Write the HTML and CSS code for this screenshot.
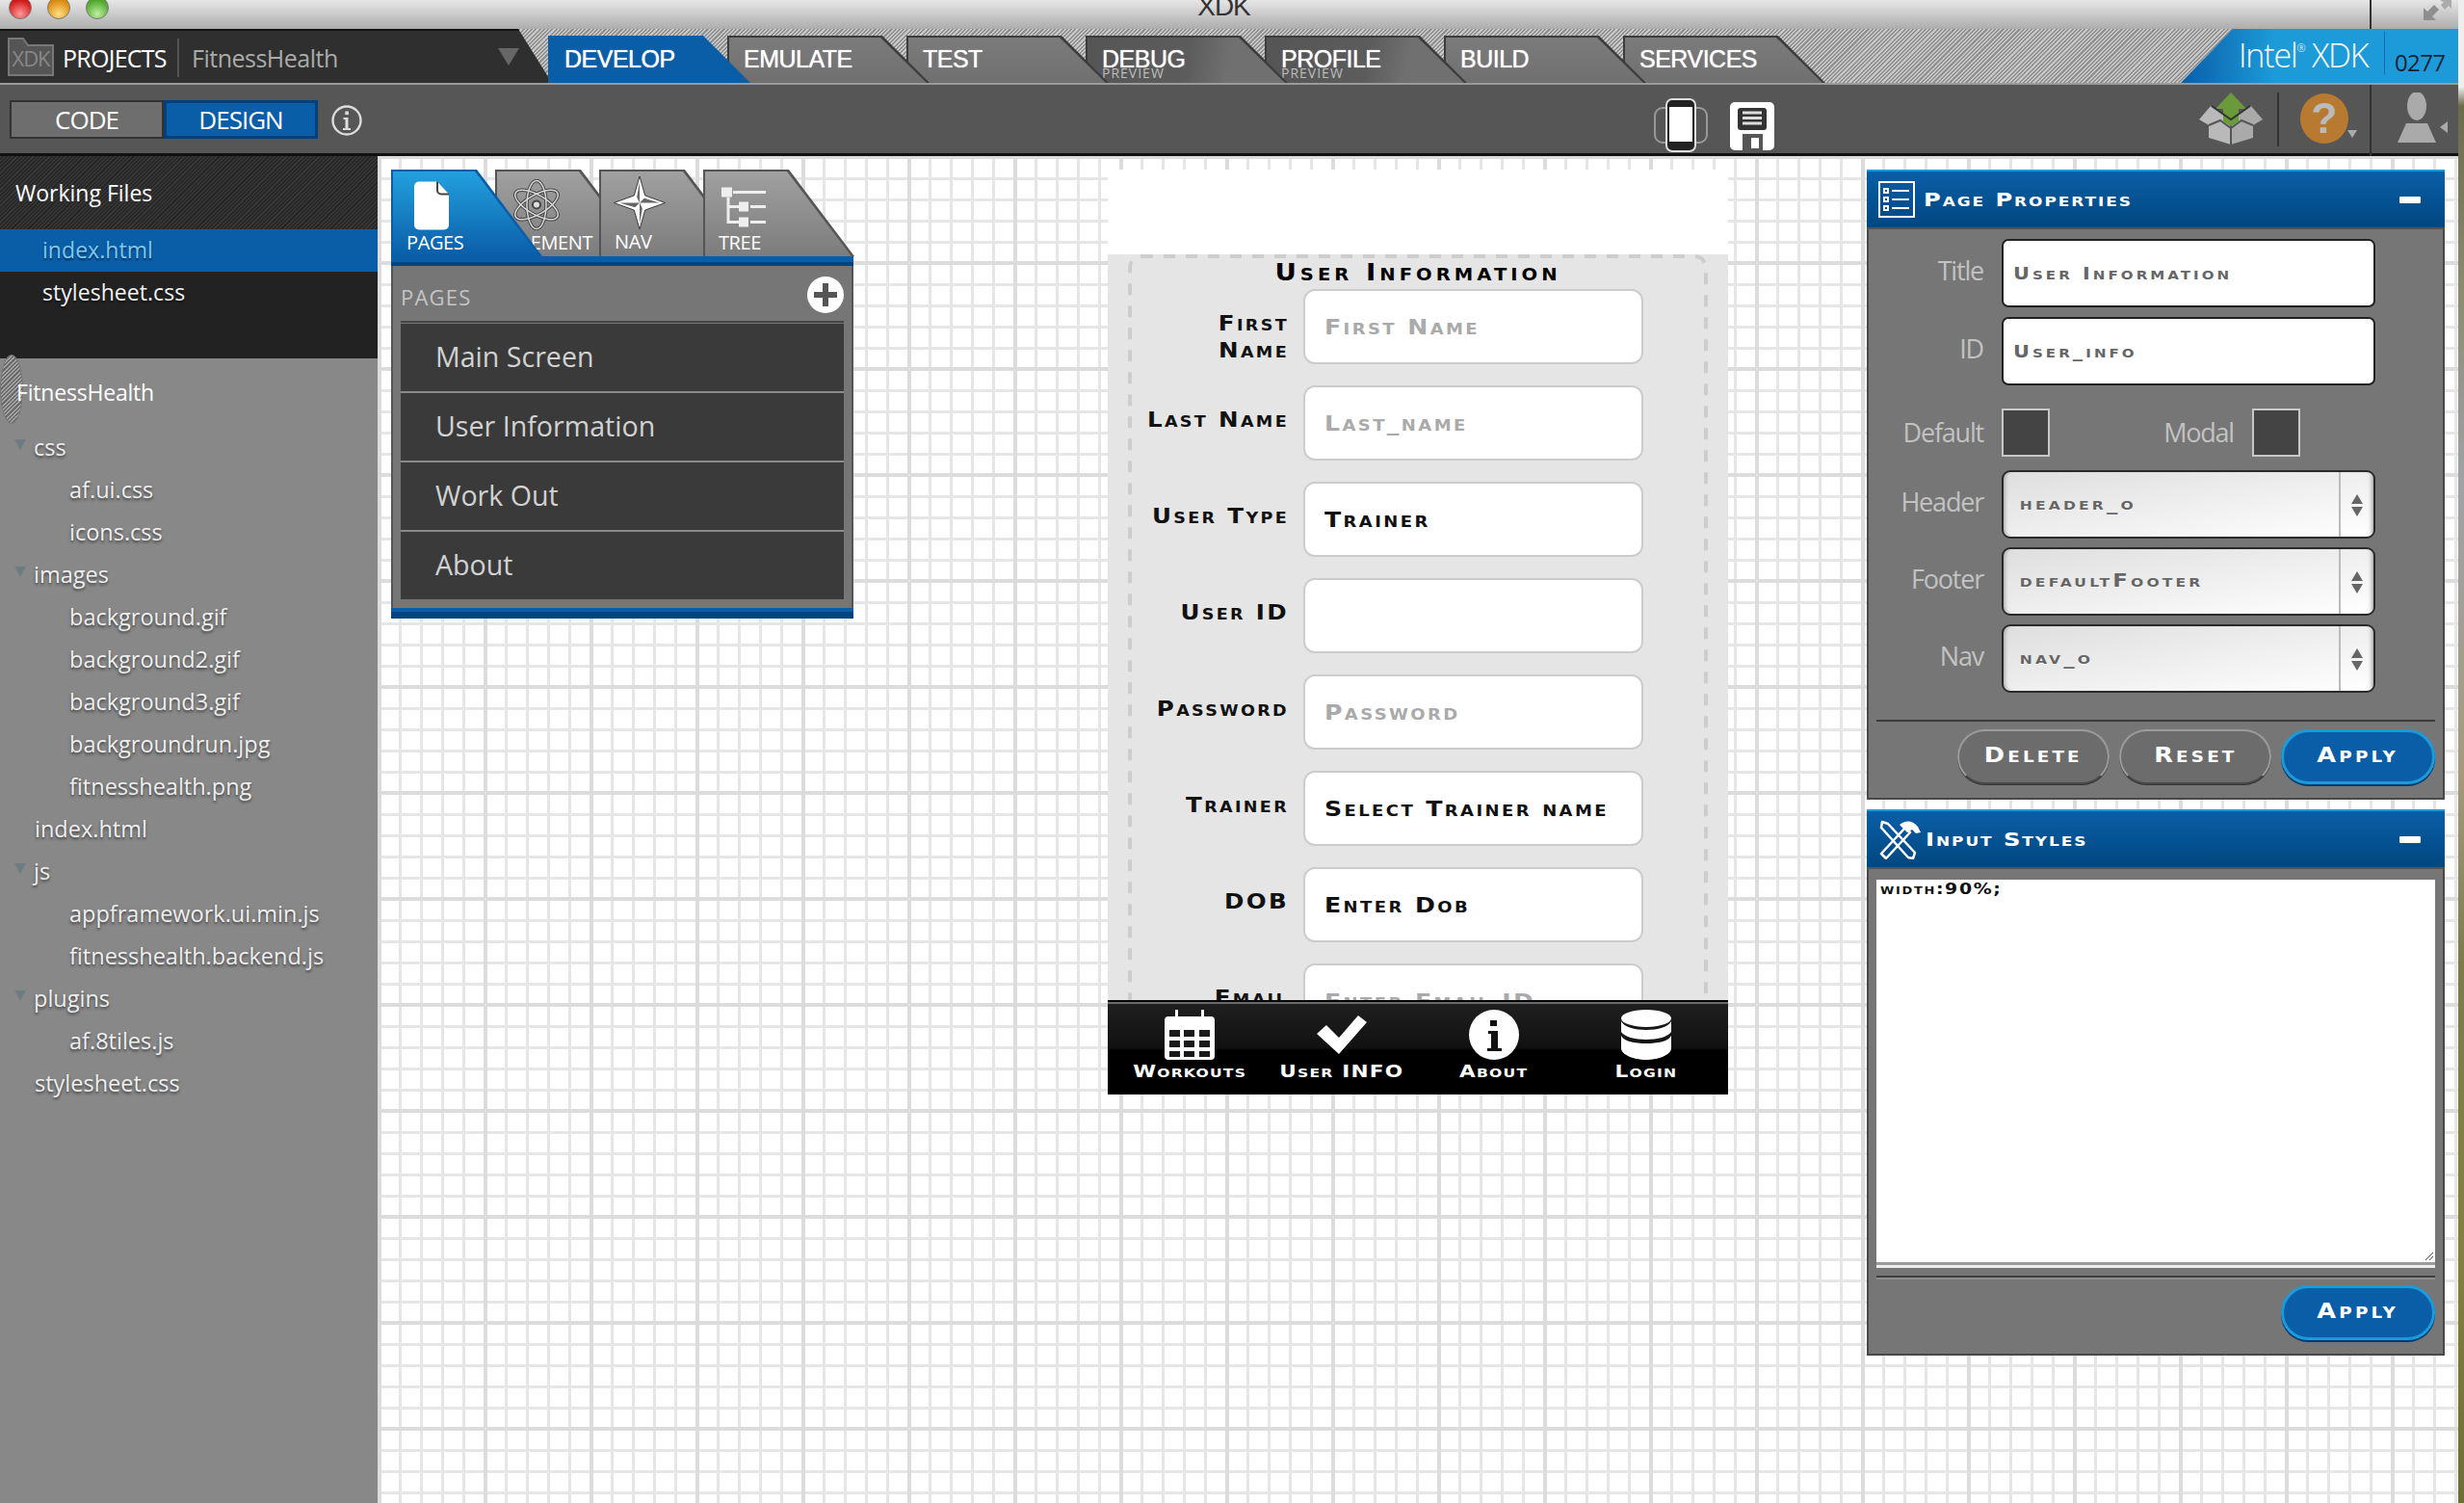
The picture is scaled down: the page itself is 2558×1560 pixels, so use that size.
FILE: index.html
```html
<!DOCTYPE html>
<html lang="en">
<head>
<meta charset="utf-8">
<title>XDK</title>
<link rel="stylesheet" href="styles.css">
</head>
<body>
<div class="screen">
<div class="window">
  <header class="titlebar">
    <div class="lights"><span class="light red"></span><span class="light amber"></span><span class="light green"></span></div>
    <div class="wintitle">XDK</div>
    <svg class="fullscreen" viewBox="0 0 30 24" width="30" height="24"><path d="M1 22V9l4 4L12 6l5 5-7 7 4 4z" fill="#8e8e8e"/><path d="M18 2l4-2 8 0v10l-3-3-4 4-4-5 3-3z" fill="#aaa"/></svg>
  </header>

  <nav class="topbar">
    <div class="project">
      <svg class="xdk-folder" viewBox="0 0 48 40" width="48" height="40"><path d="M1 39V1h15l5 7h26v31z" fill="#555" stroke="#777" stroke-width="2"/><text x="24" y="30" class="folder-text" text-anchor="middle">XDK</text></svg>
      <span class="projects-label">PROJECTS</span>
      <span class="project-name">FitnessHealth</span>
      <span class="project-caret"></span>
    </div>
    <div class="tabs">
      <a class="tab active t1"><span>DEVELOP</span></a>
      <a class="tab t2"><span>EMULATE</span></a>
      <a class="tab t3"><span>TEST</span></a>
      <a class="tab preview t4"><span>DEBUG</span><small>PREVIEW</small></a>
      <a class="tab preview t5"><span>PROFILE</span><small>PREVIEW</small></a>
      <a class="tab t6"><span>BUILD</span></a>
      <a class="tab t7"><span>SERVICES</span></a>
    </div>
    <div class="brand"><span class="intel">Intel<sup>®</sup> XDK</span><span class="build">0277</span></div>
  </nav>

  <div class="toolbar">
    <div class="seg"><button class="seg-btn">CODE</button><button class="seg-btn on">DESIGN</button></div>
    <svg class="ico-info" viewBox="0 0 32 32" width="32" height="32"><circle cx="16" cy="16" r="14.5" fill="none" stroke="#ddd" stroke-width="2.4"/><rect x="14.3" y="6.5" width="3.6" height="3.6" fill="#ddd"/><path d="M12.5 13h5v11h2.5v2H12v-2h2.5v-9h-2z" fill="#ddd"/></svg>
    <svg class="ico-phone" viewBox="0 0 56 56" width="56" height="56"><rect x="1" y="10" width="54" height="36" rx="8" fill="none" stroke="#999" stroke-width="2"/><rect x="13" y="1" width="30" height="54" rx="6" fill="#222" stroke="#ddd" stroke-width="2"/><rect x="16" y="9" width="24" height="36" fill="#fff"/></svg>
    <svg class="ico-save" viewBox="0 0 46 50" width="46" height="50"><path d="M5 0h36a5 5 0 0 1 5 5v40a5 5 0 0 1-5 5H34V33H13v17H5a5 5 0 0 1-5-5V5a5 5 0 0 1 5-5z" fill="#fff"/><rect x="8" y="6" width="30" height="23" rx="3" fill="#333"/><path d="M13 11h20M13 16.500h20M13 22h20" stroke="#ddd" stroke-width="3"/><rect x="22" y="37" width="8" height="11" fill="#fff"/></svg>
    <svg class="ico-box" viewBox="0 0 66 54" width="66" height="54"><path d="M33 27L12 14 0 28l10 6v13l23 7z" fill="#b9b9b9"/><path d="M33 27l21-13 12 14-10 6v13l-23 7z" fill="#aaa"/><path d="M33 27v27M10 34l12-5 11 8 11-8 12 5" stroke="#555" stroke-width="2" fill="none"/><path d="M33 0l16 17h-8v13l-8 5-8-5V17h-8z" fill="#6a9a3a"/><path d="M13 14l20 14 20-14" stroke="#333" stroke-width="2" fill="none"/></svg>
    <span class="tool-sep"></span>
    <div class="help"><span class="help-mark">?</span></div>
    <span class="mini-caret down"></span>
    <span class="tool-sep second"></span>
    <svg class="ico-user" viewBox="0 0 42 52" width="42" height="52"><ellipse cx="21" cy="14" rx="10" ry="15" fill="#aaa"/><path d="M10 32h22l9 20H1z" fill="#aaa"/></svg>
    <span class="mini-caret left"></span>
  </div>

  <div class="main">
    <aside class="sidebar">
      <h2 class="side-head dark">Working Files</h2>
      <ul class="working">
        <li class="file sel">index.html</li>
        <li class="file">stylesheet.css</li>
      </ul>
      <h2 class="side-head light">FitnessHealth</h2>
      <ul class="tree">
        <li class="node folder"><i class="caret"></i>css</li>
        <li class="node child">af.ui.css</li>
        <li class="node child">icons.css</li>
        <li class="node folder"><i class="caret"></i>images</li>
        <li class="node child">background.gif</li>
        <li class="node child">background2.gif</li>
        <li class="node child">background3.gif</li>
        <li class="node child">backgroundrun.jpg</li>
        <li class="node child">fitnesshealth.png</li>
        <li class="node top">index.html</li>
        <li class="node folder"><i class="caret"></i>js</li>
        <li class="node child">appframework.ui.min.js</li>
        <li class="node child">fitnesshealth.backend.js</li>
        <li class="node folder"><i class="caret"></i>plugins</li>
        <li class="node child">af.8tiles.js</li>
        <li class="node top">stylesheet.css</li>
      </ul>
    </aside>

    <section class="canvas">
      <div class="pages-panel">
        <div class="ptabs">
          <a class="ptab on p1">
            <svg class="pi page" viewBox="0 0 36 50" width="36" height="50"><path d="M5 0h19l12 13v32a5 5 0 0 1-5 5H5a5 5 0 0 1-5-5V5a5 5 0 0 1 5-5z" fill="#fff"/><path d="M24 0v9a4 4 0 0 0 4 4h8" fill="none" stroke="#444" stroke-width="2"/></svg>
            <span>PAGES</span></a>
          <a class="ptab p2">
            <svg class="pi atom" viewBox="0 0 48 52" width="48" height="52"><g fill="none" stroke="#444" stroke-width="3.500"><ellipse cx="24" cy="26" rx="10" ry="25"/><ellipse cx="24" cy="26" rx="10" ry="25" transform="rotate(60 24 26)"/><ellipse cx="24" cy="26" rx="10" ry="25" transform="rotate(-60 24 26)"/></g><g fill="none" stroke="#d8d8d8" stroke-width="1.500"><ellipse cx="24" cy="26" rx="10" ry="25"/><ellipse cx="24" cy="26" rx="10" ry="25" transform="rotate(60 24 26)"/><ellipse cx="24" cy="26" rx="10" ry="25" transform="rotate(-60 24 26)"/></g><circle cx="24" cy="26" r="4" fill="#ddd" stroke="#444" stroke-width="2"/></svg>
            <span>ELEMENT</span></a>
          <a class="ptab p3">
            <svg class="pi star" viewBox="0 0 56 58" width="56" height="58"><path d="M28 0l6 21 22 8-22 8-6 21-6-21L0 29l22-8z" fill="#fff" stroke="#333"/><path d="M28 6l-3 17 3 6zM50 29l-17-5-5 5zM28 52l3-17-3-6zM6 29l17 5 5-5z" fill="#666"/></svg>
            <span>NAV</span></a>
          <a class="ptab p4">
            <svg class="pi treei" viewBox="0 0 46 42" width="46" height="42"><path d="M12 5h34M7 10v26h11M7 20h11M30 20h16M30 36h16" stroke="#eee" stroke-width="3" fill="none"/><rect x="0" y="0" width="11" height="10" fill="#eee"/><rect x="18" y="15" width="10" height="10" fill="#eee"/><rect x="18" y="31" width="10" height="10" fill="#eee"/></svg>
            <span>TREE</span></a>
        </div>
        <div class="blue-bar"></div>
        <div class="pages-body">
          <div class="pages-head"><span>PAGES</span>
            <svg class="plus" viewBox="0 0 38 38" width="38" height="38"><circle cx="19" cy="19" r="19" fill="#fff"/><path d="M16 7h6v9h9v6h-9v9h-6v-9H7v-6h9z" fill="#555"/></svg>
          </div>
          <ul class="page-list">
            <li>Main Screen</li>
            <li>User Information</li>
            <li>Work Out</li>
            <li>About</li>
          </ul>
        </div>
        <div class="blue-bar foot"></div>
      </div>

      <div class="phone">
        <div class="phone-header"></div>
        <div class="phone-view">
          <form class="form">
            <svg class="dash" width="602" height="900"><rect x="2" y="2" width="598" height="1000" rx="12" fill="none" stroke="#cdcdcd" stroke-width="4" stroke-dasharray="12 11"/></svg>
            <h3 class="form-title">User Information</h3>
            <div class="row"><label>First<br>Name</label><div class="inp ph"><span>First Name</span></div></div>
            <div class="row"><label>Last Name</label><div class="inp ph"><span>Last_name</span></div></div>
            <div class="row"><label>User Type</label><div class="inp"><span>Trainer</span></div></div>
            <div class="row"><label>User ID</label><div class="inp"></div></div>
            <div class="row"><label>Password</label><div class="inp ph"><span>Password</span></div></div>
            <div class="row"><label>Trainer</label><div class="inp"><span>Select Trainer name</span></div></div>
            <div class="row"><label>DOB</label><div class="inp"><span>Enter Dob</span></div></div>
            <div class="row"><label>Email</label><div class="inp ph"><span>Enter Email ID</span></div></div>
          </form>
        </div>
        <div class="phone-foot">
          <a class="fitem">
            <svg viewBox="0 0 52 52" width="52" height="52"><path d="M4 7h44a4 4 0 0 1 4 4v37a4 4 0 0 1-4 4H4a4 4 0 0 1-4-4V11a4 4 0 0 1 4-4z" fill="#fff"/><rect x="11" y="0" width="3" height="10" fill="#fff"/><rect x="38" y="0" width="3" height="10" fill="#fff"/><g fill="#1a1a1a"><rect x="5" y="21" width="11" height="7"/><rect x="20" y="21" width="11" height="7"/><rect x="36" y="21" width="11" height="7"/><rect x="5" y="32" width="11" height="7"/><rect x="20" y="32" width="11" height="7"/><rect x="36" y="32" width="11" height="7"/><rect x="5" y="43" width="11" height="6"/><rect x="20" y="43" width="11" height="6"/><rect x="36" y="43" width="11" height="6"/></g></svg>
            <span>Workouts</span></a>
          <a class="fitem">
            <svg viewBox="0 0 52 52" width="52" height="52"><path d="M0 25l10-9 13 13L43 6l9 7-29 33z" fill="#fff"/></svg>
            <span>User INFO</span></a>
          <a class="fitem">
            <svg viewBox="0 0 52 52" width="52" height="52"><circle cx="26" cy="26" r="26" fill="#fff"/><rect x="22" y="11" width="7" height="6" fill="#111"/><path d="M20 22h10v18h4v3H19v-3h4V25h-3z" fill="#111"/></svg>
            <span>About</span></a>
          <a class="fitem">
            <svg viewBox="0 0 52 52" width="52" height="52"><ellipse cx="26" cy="9" rx="26" ry="9" fill="#fff"/><path d="M0 12c3 6 14 9 26 9s23-3 26-9v11c-3 5-14 8-26 8S3 28 0 23z" fill="#fff"/><path d="M0 27c3 6 14 8 26 8s23-2 26-8v13c0 7-14 12-26 12S0 47 0 40z" fill="#fff"/></svg>
            <span>Login</span></a>
        </div>
      </div>

      <div class="props">
        <section class="prop-panel first">
          <header class="prop-head">
            <svg viewBox="0 0 38 38" width="38" height="38"><rect x="1" y="1" width="36" height="36" fill="none" stroke="#fff" stroke-width="2"/><g fill="none" stroke="#fff" stroke-width="2"><rect x="6" y="8" width="4" height="4"/><rect x="6" y="17" width="4" height="4"/><rect x="6" y="26" width="4" height="4"/><path d="M14 10h18M14 19h18M14 28h18"/></g></svg>
            <span class="prop-title">Page Properties</span><i class="minus"></i>
          </header>
          <div class="prop-body">
            <div class="field"><label>Title</label><div class="pinp"><span>User Information</span></div></div>
            <div class="field"><label>ID</label><div class="pinp"><span>User_info</span></div></div>
            <div class="checks">
              <label>Default</label><span class="check"></span>
              <label class="modal-label">Modal</label><span class="check"></span>
            </div>
            <div class="field sel-field"><label>Header</label><div class="psel"><span>header_o</span><b class="spin"></b></div></div>
            <div class="field sel-field"><label>Footer</label><div class="psel"><span>defaultFooter</span><b class="spin"></b></div></div>
            <div class="field sel-field"><label>Nav</label><div class="psel"><span>nav_o</span><b class="spin"></b></div></div>
            <div class="actions">
              <button class="pill"><span>Delete</span></button>
              <button class="pill"><span>Reset</span></button>
              <button class="pill primary"><span>Apply</span></button>
            </div>
          </div>
        </section>
        <section class="prop-panel second">
          <header class="prop-head">
            <svg viewBox="0 0 44 42" width="44" height="42"><g fill="none" stroke="#fff" stroke-width="2.500" stroke-linejoin="round"><path d="M3 36l25-27 5 5L8 41z"/><path d="M4 3l6 2 28 30-2 6-5-1L3 9z"/></g><path d="M22 6c6-5 13-5 19 2l3 6-5 1-4-4-5 3-7-7z" fill="#fff"/></svg>
            <span class="prop-title">Input Styles</span><i class="minus"></i>
          </header>
          <div class="style-body">
            <div class="style-area"><span class="area-text">width:90%;</span>
              <svg class="grip" viewBox="0 0 10 10" width="10" height="10"><path d="M1 9l8-8M5 9l4-4" stroke="#555" fill="none"/></svg>
            </div>
            <div class="area-foot"></div>
            <div class="style-rule"></div>
            <div class="style-actions"><button class="pill primary"><span>Apply</span></button></div>
          </div>
        </section>
      </div>
    </section>
  </div>
</div>
<div class="wallpaper"></div>
</div>
</body>
</html>
```
FILE: styles.css
```css
* { box-sizing: border-box; }
html, body { margin: 0; height: 100%; overflow: hidden; }
body { font-family: "Open Sans", "Liberation Sans", sans-serif; background: #fff; }
ul { list-style: none; margin: 0; padding: 0; }
h2, h3 { margin: 0; font-weight: 400; }
button { font: inherit; }

.screen { display: flex; width: 2558px; height: 1560px; }
.window { width: 2552px; height: 1560px; display: flex; flex-direction: column; }
.wallpaper { flex: 1; background: linear-gradient(180deg, #eee 0, #eee 90px, #6b6a4d 110px, #8c8a72 300px, #a0a2a6 500px, #a59a80 800px, #7d7a4e 1000px, #84803f 1300px, #6f6c38 1560px); }

/* title bar */
.titlebar { height: 30px; flex: none; display: flex; overflow: hidden; background: linear-gradient(180deg, #e6e6e6, #adadad); }
.lights { display: flex; gap: 16px; padding-left: 9px; width: 200px; }
.light { width: 24px; height: 24px; margin-top: -4px; border-radius: 50%; border: 1px solid #777; }
.red { background: radial-gradient(circle at 50% 80%, #ff9a9a, #d01818 70%); }
.amber { background: radial-gradient(circle at 50% 80%, #ffdf80, #d98a10 70%); }
.green { background: radial-gradient(circle at 50% 80%, #bdf0a0, #4fa52c 70%); }
.wintitle { flex: 1; text-align: center; font: 28px/24px "Liberation Sans", sans-serif; letter-spacing: -1px; color: #333; margin-top: -5px; padding-right: 174px; }
.fullscreen { margin: -1px 7px 0 0; width: 30px; }

/* top bar */
.topbar { height: 58px; flex: none; display: flex; position: relative; border-bottom: 2px solid #9a9a9a;
  background: repeating-linear-gradient(135deg, #8f8f8f 0 1.5px, #c8c8c8 1.5px 3px); }
.project { width: 569px; flex: none; display: flex; align-items: center; padding: 3px 30px 0 8px; color: #fff;
  background: #2f2f2f; border-top: 2px solid #111; clip-path: polygon(0 0, 538px 0, 573px 100%, 0 100%); }
.xdk-folder { flex: none; margin-top: -3px; }
.folder-text { font: 22px "Open Sans", sans-serif; fill: #888; letter-spacing: -1px; }
.projects-label { font-size: 25px; letter-spacing: -.75px; margin-left: 9px; width: 121px; border-right: 2px solid #555; line-height: 40px; margin-top: -1px; }
.project-name { font-size: 25px; letter-spacing: -.5px; color: #aaa; margin-left: 13px; line-height: 40px; margin-top: -1px; }
.project-caret { margin: -3px 0 0 auto; border: 11px solid transparent; border-top: 18px solid #666; border-bottom: 0; }
.tabs { display: flex; align-items: flex-end; margin-top: 7px; height: 49px; }
.tab { position: relative; width: 210px; height: 49px; margin-right: -24px; padding: 12px 0 0 17px; display: block; color: #fff;
  font: 25px/24px "Liberation Sans", sans-serif; letter-spacing: -.5px; background: #3c3c3c; text-shadow: 0 0 1px #fff;
  clip-path: polygon(0 0, 161px 0, 100% 100%, 0 100%); }
.tab::before { content: ""; position: absolute; top: 2px; left: 2px; right: 0; bottom: 0; background: linear-gradient(180deg, #7b7b7b, #707070);
  clip-path: polygon(0 0, 157px 0, 205px 100%, 0 100%); }
.tab span, .tab small { position: relative; display: block; }
.tab small { font: 14px/10px "Open Sans", sans-serif; letter-spacing: 1px; color: #bdbdbd; text-shadow: none; margin-top: -2px; }
.tab.preview::before { background: linear-gradient(100deg, #555 0, #5c5c5c 50%, #707070 70%); }
.tab.active { background: #0a5ea8; }
.tab.active::before { background: #0a5ea8; }
.t1 { z-index: 7; } .t2 { z-index: 6; } .t3 { z-index: 5; } .t4 { z-index: 4; } .t5 { z-index: 3; } .t6 { z-index: 2; } .t7 { z-index: 1; }
.brand { margin-left: auto; width: 288px; display: flex; align-items: flex-start; padding-left: 60px;
  background: linear-gradient(90deg, #0a5ea8 0, #1d9bd9 34%); clip-path: polygon(54px 0, 100% 0, 100% 100%, 0 100%); }
.intel { color: #fff; font-size: 34px; line-height: 48px; font-weight: 300; letter-spacing: -1.2px; width: 152px; margin-top: 3px; border-right: 1px solid #0a6ab8; height: 44px; white-space: nowrap; }
.intel sup { font-size: 11px; vertical-align: 16px; line-height: 0; }
.build { color: #123; font-size: 24px; letter-spacing: -.6px; margin: 21px 0 0 10px; line-height: 28px; }

/* toolbar */
.toolbar { height: 74px; flex: none; display: flex; align-items: center; padding-left: 10px; background: #565656; border-bottom: 3px solid #111; }
.seg { display: flex; }
.seg-btn { width: 160px; height: 40px; padding: 0; color: #fff; font-size: 26px; letter-spacing: -1px; line-height: 32px; background: #6e6e6e; border: 2px solid #333; }
.seg-btn.on { background: #0a5ea8; border: 3px solid #00407a; }
.ico-info { margin: 2px 0 0 14px; flex: none; }
.ico-phone { margin: 12px 0 0 1341px; flex: none; }
.ico-save { margin: 15px 0 0 23px; flex: none; }
.ico-box { margin: -2px 0 0 441px; flex: none; }
.tool-sep { width: 2px; height: 56px; background: #333; margin: 0 0 0 15px; flex: none; }
.tool-sep.second { margin-left: 13px; }
.help { width: 50px; height: 52px; margin: -2px 0 0 22px; border-radius: 50%; background: #b87a30; text-align: center; flex: none; }
.help-mark { color: #bbb; font: 700 44px/52px "Liberation Sans", sans-serif; }
.mini-caret { flex: none; border-style: solid; border-color: transparent; }
.mini-caret.down { border-width: 8px 5px 0; border-top-color: #aaa; margin: 30px 0 0 -1px; }
.mini-caret.left { border-width: 6px 8px 6px 0; border-right-color: #aaa; margin: 16px 0 0 3px; }
.ico-user { margin: -4px 0 0 26px; flex: none; }

/* main */
.main { flex: 1; display: flex; min-height: 0; }
.sidebar { width: 392px; flex: none; background: #888; color: #eee; font-size: 23px; }
.side-head { font-size: 23px; line-height: 30px; color: #fff; padding-left: 16px; }
.side-head.dark { height: 76px; padding-top: 23px; background: repeating-linear-gradient(135deg, #363636 0 1.5px, #262626 1.5px 3px); }
.side-head.light { height: 72px; padding-top: 23px; background: repeating-linear-gradient(135deg, #6a6a6a 0 1.5px, #a4a4a4 1.5px 3px); letter-spacing: -.2px; }
.working { height: 134px; background: #222; }
.file { height: 44px; line-height: 42px; padding-left: 44px; color: #f2f2f2; letter-spacing: .05px; text-shadow: 0 2px 2px rgba(0,0,0,.5); }
.file.sel { background: #0a5ea8; color: #7cc8f2; }
.tree { font-size: 23.5px; }
.node { height: 44px; line-height: 44px; text-shadow: 0 2px 3px rgba(0,0,0,.55); display: flex; align-items: center; padding-top: 3px; }
.node.folder { padding-left: 15px; }
.node.child { padding-left: 72px; }
.node.top { padding-left: 36px; }
.caret { width: 0; height: 0; margin-right: 8px; margin-top: -5px; border-style: solid; border-width: 11px 6.5px 0; border-color: #6d7c82 transparent transparent; }

/* canvas */
.canvas { flex: 1; display: flex; align-items: flex-start; padding: 14px 0 0 14px; background-color: #fff; overflow: hidden;
  background-image:
    linear-gradient(90deg, #dcdcdc 4px, transparent 4px),
    linear-gradient(180deg, #dcdcdc 4px, transparent 4px),
    linear-gradient(90deg, #e6e6e6 3px, transparent 3px),
    linear-gradient(180deg, #e6e6e6 3px, transparent 3px);
  background-size: 110px 110px, 110px 110px, 22px 22px, 22px 22px;
  background-position: 0 0, 0 -1px, 0 0, 0 0; }

/* pages panel */
.pages-panel { width: 480px; flex: none; }
.ptabs { display: flex; height: 90px; }
.ptab { position: relative; width: 157px; height: 90px; margin-right: -49px; padding: 8px 0 0 16px; background: #555; display: block;
  clip-path: polygon(0 0, 89px 0, 100% 100%, 0 100%); color: #fff; }
.ptab::before { content: ""; position: absolute; top: 2px; left: 2px; right: 0; bottom: 0; background: linear-gradient(180deg, #a0a0a0, #7c7c7c);
  clip-path: polygon(0 0, 85px 0, 152px 100%, 0 100%); }
.ptab.on { background: #0a5ea8; }
.ptab.on::before { background: linear-gradient(180deg, #23a0de, #0a5ea8); }
.ptab > * { position: relative; display: block; }
.ptab span { font-size: 20px; line-height: 24px; letter-spacing: -.4px; padding-top: 1px; }
.pi { height: 55px; }
.p1 { z-index: 4; } .p2 { z-index: 1; } .p3 { z-index: 2; } .p4 { z-index: 3; }
.page { margin-left: 8px; padding-top: 4px; height: 55px; }
.atom { margin-left: 3px; padding-top: 2px; }
.star { margin-left: -2px; height: 55px; margin-top: -1px; }
.treei { margin-left: 3px; padding-top: 8px; height: 55px; }
.blue-bar { height: 10px; background: linear-gradient(180deg, #0a5ea8 55%, #00447f 55%); }
.blue-bar.foot { height: 11px; background: linear-gradient(180deg, #0a5ea8 40%, #00447f 40%); }
.pages-body { background: #767676; border: solid #555; border-width: 0 2px; padding: 0 8px 9px; }
.pages-head { height: 59px; display: flex; justify-content: space-between; align-items: flex-start; color: #c4c4c4; font-size: 22px; letter-spacing: 1.2px; border-bottom: 2px solid #444; padding-top: 11px; }
.pages-head span { line-height: 28px; margin-top: 7px; }
.page-list { margin-top: 1px; }
.page-list li { height: 72px; line-height: 68px; padding-left: 36px; background: #3a3a3a; color: #d2d2d2; font-size: 28.6px; border-bottom: 2px solid #8a8a8a; }
.page-list li:last-child { border-bottom: 0; height: 70px; }

/* phone */
.phone { width: 644px; flex: none; margin-left: 264px; }
.phone-header { height: 88px; background: #fff; }
.phone-view { height: 776px; background: #e5e5e5; overflow: hidden; padding: 0 21px; }
.form { position: relative; height: 900px; padding-top: 6px; font: 700 21px/28px "DejaVu Sans", sans-serif; font-variant: small-caps; color: #111; letter-spacing: 2px; }
.dash { position: absolute; top: 0; left: 0; }
.form-title { position: relative; text-align: center; font: 700 24px/26px "DejaVu Sans", sans-serif; font-variant: small-caps; letter-spacing: 3.5px; height: 30px; color: #000; transform: scaleX(1.15); }
.row { position: relative; display: flex; height: 100px; align-items: flex-start; }
.row label { width: 167px; text-align: right; padding-top: 22px; flex: none; transform: scaleX(1.17); transform-origin: right; }
.inp { width: 353px; height: 78px; margin-left: 15px; background: #fff; border: 2px solid #ccc; border-radius: 12px; padding: 24px 0 0 20px; white-space: nowrap; }
.inp span { display: inline-block; transform: scaleX(1.2); transform-origin: left; }
.inp.ph { color: #aaa; }

.phone-foot { height: 98px; margin-top: -2px; position: relative; display: flex; padding: 0 6px; border-top: 2px solid #000;
  background: linear-gradient(180deg, #6a6a6a 0 2px, #1f1f1f 2px, #111 48px, #000 50px); }
.fitem { width: 158px; display: flex; flex-direction: column; align-items: center; padding-top: 8px; color: #fff; font: 700 18px/24px "DejaVu Sans", sans-serif; font-variant: small-caps; letter-spacing: 1px; }
.fitem svg { flex: none; margin-bottom: 0; }
.fitem span { transform: scaleX(1.2); white-space: nowrap; }

/* property panels */
.props { width: 600px; flex: none; margin-left: 144px; }
.prop-panel { background: #767676; border: 2px solid #484848; border-top: 0; }
.first { height: 654px; margin-bottom: 10px; }
.second { height: 567px; }
.prop-head { height: 62px; margin: 0 -2px; display: flex; align-items: center; padding-left: 12px; color: #fff; border-top: 2px solid #1d9bd9; border-bottom: 2px solid #555; background: linear-gradient(180deg, #0a5ea8, #00477f); }
.prop-head svg { flex: none; }
.prop-title { font: 700 20px "DejaVu Sans", sans-serif; font-variant: small-caps; letter-spacing: 1.6px; margin-left: 9px; transform: scaleX(1.21); transform-origin: left; white-space: nowrap; }
.second .prop-title { margin-left: 5px; }
.minus { width: 22px; height: 7px; background: #fff; border-radius: 1px; margin-left: auto; margin-right: 25px; }
.prop-body { padding-top: 10px; }
.field { display: flex; align-items: center; height: 71px; margin-bottom: 10px; }
.field label, .checks label { width: 120px; text-align: right; padding-right: 1px; color: #c2c2c2; font-size: 27px; letter-spacing: -1.2px; margin-top: -6px; flex: none; }
.checks label { margin-top: 0; }
.pinp { width: 388px; height: 71px; margin-left: 18px; background: #fff; border: 2px solid #222; border-radius: 7px; padding: 20px 0 0 10px; color: #666; font: 700 18px/28px "DejaVu Sans", sans-serif; font-variant: small-caps; letter-spacing: 2.6px; white-space: nowrap; }
.pinp span { display: inline-block; transform: scaleX(1.16); transform-origin: left; }
.checks { display: flex; align-items: center; height: 49px; margin: 24px 0 15px; }
.check { width: 50px; height: 50px; margin-left: 18px; background: #444; border: 2px solid #c8c8c8; flex: none; }
.checks .modal-label { width: 75px; margin-left: 117px; }
.sel-field { height: 71px; margin-bottom: 9px; }
.psel { width: 388px; height: 71px; margin-left: 18px; display: flex; border: 2px solid #2a2a2a; border-radius: 9px; overflow: hidden; background: linear-gradient(170deg, #dedede, #f0f0f0 55%, #fff); box-shadow: inset 4px 0 4px -3px #999; }
.psel span { flex: 1; padding: 18px 0 0 14px; color: #666; font: 700 19px/28px "DejaVu Sans", sans-serif; font-variant: small-caps; letter-spacing: 2.6px; text-shadow: 0 1px 0 #fff; white-space: nowrap; transform: scaleX(1.2); transform-origin: left; }
.spin { width: 36px; border-left: 2px solid #bbb; position: relative; box-shadow: inset -5px 0 5px -4px #888; }
.spin::before, .spin::after { content: ""; position: absolute; left: 11px; border-style: solid; border-color: transparent; border-width: 0 6px; }
.spin::before { top: 23px; border-bottom: 10px solid #666; }
.spin::after { top: 36px; border-top: 10px solid #666; }
.actions { display: flex; justify-content: flex-end; gap: 10px; margin: 28px 8px 0; padding-top: 8px; border-top: 2px solid #3a3a3a; }
.pill { width: 158px; height: 57px; padding: 0 0 4px; border-radius: 29px; border: 2px solid #9c9c9c; border-bottom-color: #4a4a4a; background: #6c6c6c; color: #fff; font: 700 21px "DejaVu Sans", sans-serif; font-variant: small-caps; letter-spacing: 2.6px; box-shadow: 0 1px 0 #333; }
.pill span { display: inline-block; transform: scaleX(1.22); }
.pill.primary { width: 160px; background: #0a5ea8; border: 3px solid #1d9bd9; box-shadow: 0 2px 0 #003a70; }
.style-body { padding: 11px 8px 0; }
.style-area { position: relative; height: 397px; background: #fff; padding: 0 4px; color: #111; font: 700 16px/20px "DejaVu Sans", sans-serif; font-variant: small-caps; letter-spacing: 1.4px; }
.area-text { display: inline-block; transform: scaleX(1.18); transform-origin: left; }
.grip { position: absolute; right: 1px; bottom: 1px; }
.area-foot { height: 6px; background: #eee; border-top: 3px solid #9a9a9a; }
.style-rule { height: 4px; margin-top: 8px; border-top: 2px solid #3f3f3f; background: #8e8e8e; }
.style-actions { display: flex; justify-content: flex-end; margin-top: 6px; }
```
